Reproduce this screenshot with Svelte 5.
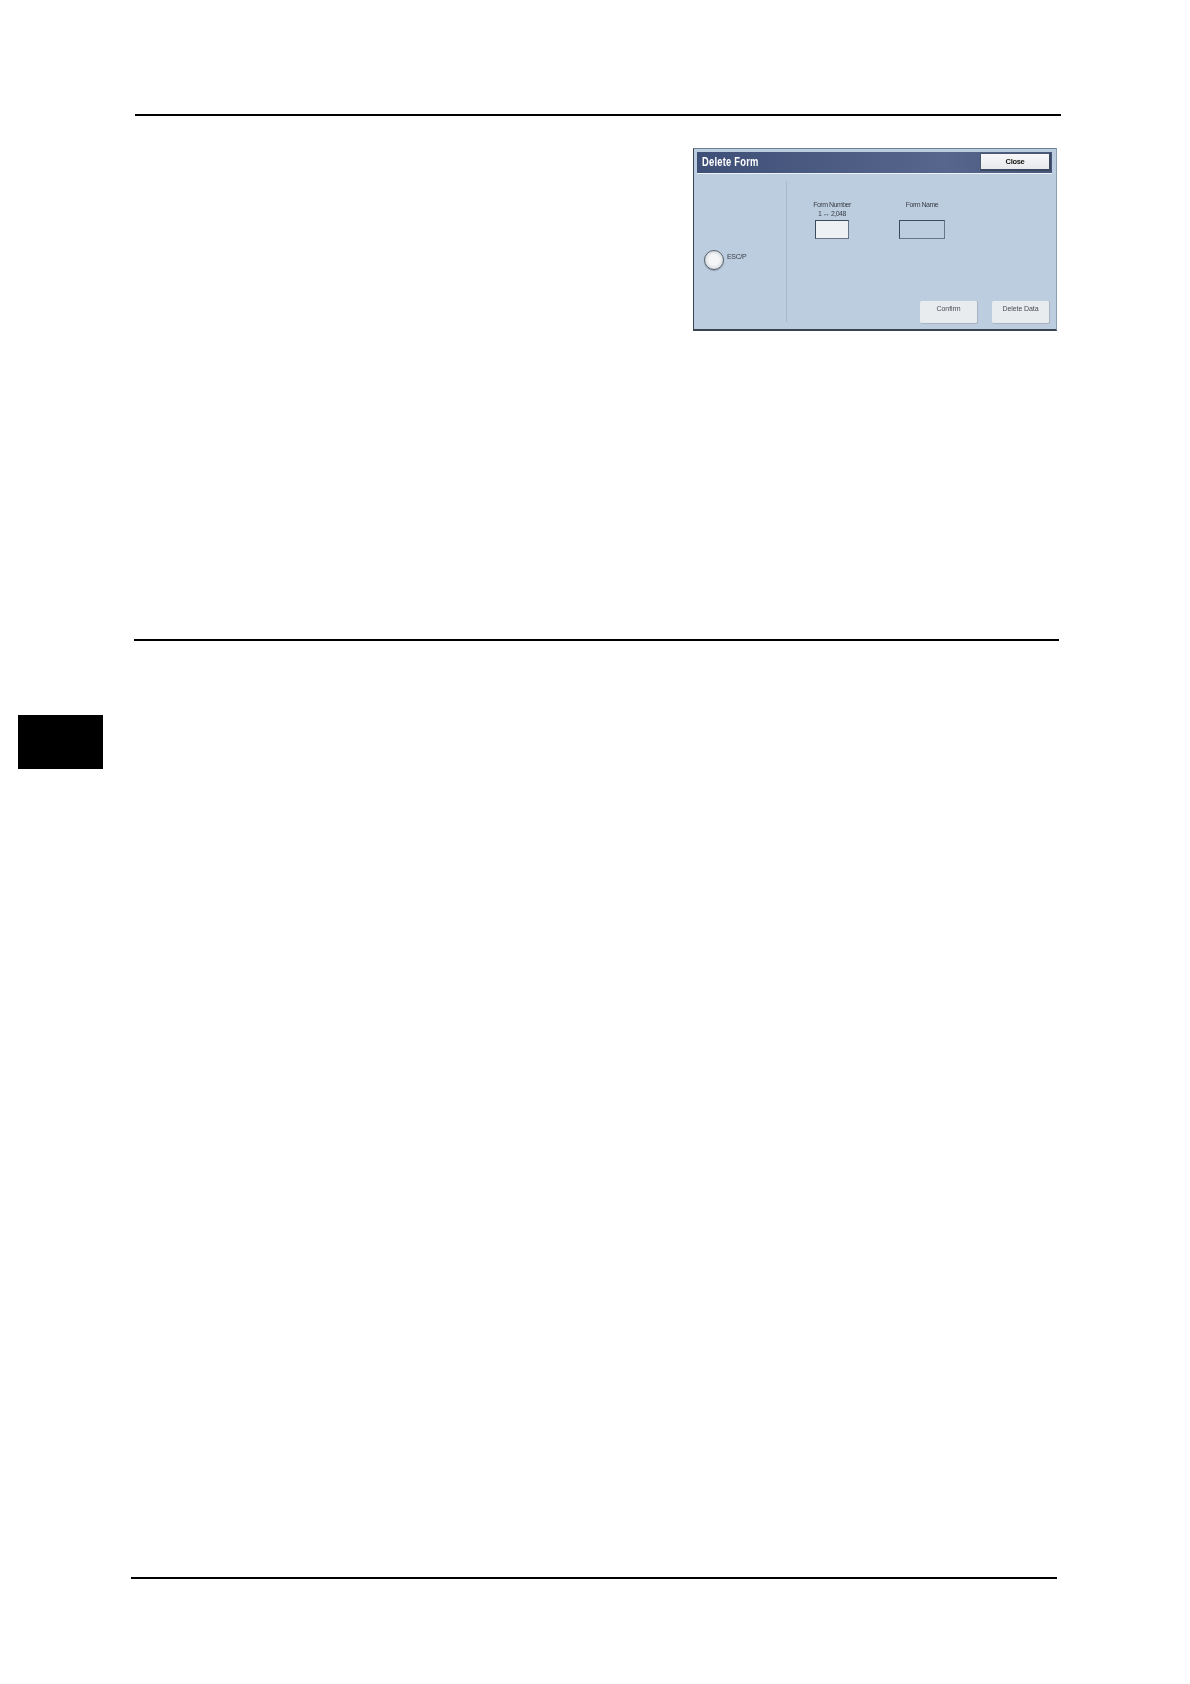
<script>
    let system = "ESC/P";
</script>

<div class="page">
    <div class="rule rule-top"></div>

    <div class="dialog">
        <div class="titlebar">
            <span class="title">Delete Form</span>
            <button class="close">Close</button>
        </div>
        <div class="content">
            <div class="side">
                <span class="radio"></span>
                <span class="radio-label">{system}</span>
            </div>
            <div class="main">
                <div class="fields">
                    <div class="field">
                        <div class="label">Form Number<br />1 ↔ 2,048</div>
                        <div class="box box-number"></div>
                    </div>
                    <div class="field">
                        <div class="label">Form Name</div>
                        <div class="box box-name"></div>
                    </div>
                </div>
                <div class="actions">
                    <button class="action">Confirm</button>
                    <button class="action">Delete Data</button>
                </div>
            </div>
        </div>
    </div>

    <div class="rule rule-middle"></div>
    <div class="tab"></div>
    <div class="rule rule-bottom"></div>
</div>

<style>
    :global(body) {
        margin: 0;
        background: #fff;
    }

    .page {
        width: 1190px;
        height: 1684px;
        overflow: hidden;
        font-family: "Liberation Sans", Arial, sans-serif;
        display: flow-root;
    }

    .rule {
        height: 2px;
        background: #000;
    }

    .rule-top {
        width: 926px;
        margin: 114px 0 0 135px;
    }

    .rule-middle {
        width: 925px;
        margin: 308px 0 0 134px;
    }

    .rule-bottom {
        width: 926px;
        margin: 808px 0 0 131px;
    }

    .tab {
        width: 85px;
        height: 54px;
        margin: 74px 0 0 18px;
        background: #000;
    }

    .dialog {
        box-sizing: border-box;
        width: 364px;
        height: 183px;
        margin: 32px 0 0 693px;
        padding: 3px 4px 0 3px;
        display: flex;
        flex-direction: column;
        background: #bccde0;
        border-top: 1px solid #6f7f92;
        border-left: 1px solid #39424e;
        border-right: 1px solid #8d9db0;
        border-bottom: 2px solid #3a4350;
        filter: blur(0.5px);
    }

    .titlebar {
        height: 21px;
        flex-shrink: 0;
        display: flex;
        align-items: flex-start;
        justify-content: space-between;
        padding-right: 1px;
        background: linear-gradient(90deg, #3f5078, #56668c 70%, #46567c);
        border-bottom: 1px solid #eef3f8;
    }

    .title {
        margin: 3px 0 0 5px;
        color: #fff;
        font-size: 12px;
        font-weight: 700;
        letter-spacing: 0.3px;
        line-height: 15px;
        transform: scaleX(0.78);
        transform-origin: left center;
    }

    .close {
        width: 71px;
        height: 18px;
        margin-top: 1px;
        padding: 0;
        color: #111;
        font: 700 7.5px/15px "Liberation Sans", Arial, sans-serif;
        letter-spacing: -0.3px;
        background: linear-gradient(#f8f8f8, #e6e9ec);
        border: 1px solid #4a5870;
        border-right: 2px solid #3a4860;
        border-bottom: 2px solid #3a4860;
    }

    .content {
        flex: 1;
        display: flex;
    }

    .side {
        width: 89px;
        flex-shrink: 0;
        display: flex;
        align-items: flex-start;
        padding: 76px 0 0 7px;
        box-sizing: border-box;
    }

    .radio {
        box-sizing: border-box;
        width: 20px;
        height: 20px;
        flex-shrink: 0;
        border-radius: 50%;
        background: radial-gradient(circle at 50% 50%, #f4f5f6 40%, #cfd5dc 78%);
        border: 1px solid #59626d;
        box-shadow: 0 1px 1px #8d99a8;
    }

    .radio-label {
        margin: 1px 0 0 3px;
        color: #3a3f47;
        font-size: 7px;
        letter-spacing: -0.35px;
        line-height: 12px;
    }

    .main {
        flex: 1;
        margin: 7px 0 7px;
        padding-left: 15px;
        border-left: 1px solid #a9b9cc;
        display: flex;
        flex-direction: column;
        justify-content: space-between;
    }

    .fields {
        display: flex;
        gap: 30px;
        margin-top: 19px;
    }

    .field {
        width: 60px;
        display: flex;
        flex-direction: column;
        align-items: center;
    }

    .label {
        height: 20px;
        color: #3a3f47;
        font-size: 7px;
        letter-spacing: -0.5px;
        line-height: 9px;
        text-align: center;
        white-space: nowrap;
    }

    .box {
        box-sizing: border-box;
        height: 19px;
        border: 1px solid #3c4a5c;
        border-bottom-color: #66758a;
        border-right-color: #66758a;
    }

    .box-number {
        width: 34px;
        background: #eef1f4;
    }

    .box-name {
        width: 46px;
        background: #bccde0;
    }

    .actions {
        display: flex;
        justify-content: flex-end;
        gap: 14px;
        margin-bottom: -2px;
        padding-right: 2px;
    }

    .action {
        width: 58px;
        height: 23px;
        padding: 0 0 8px;
        color: #4a4e55;
        font: 7px/9px "Liberation Sans", Arial, sans-serif;
        letter-spacing: -0.1px;
        background: #e9ecef;
        border: none;
        border-radius: 2px;
        border-bottom: 1px solid #a9b3bf;
        border-right: 1px solid #a9b3bf;
    }
</style>
